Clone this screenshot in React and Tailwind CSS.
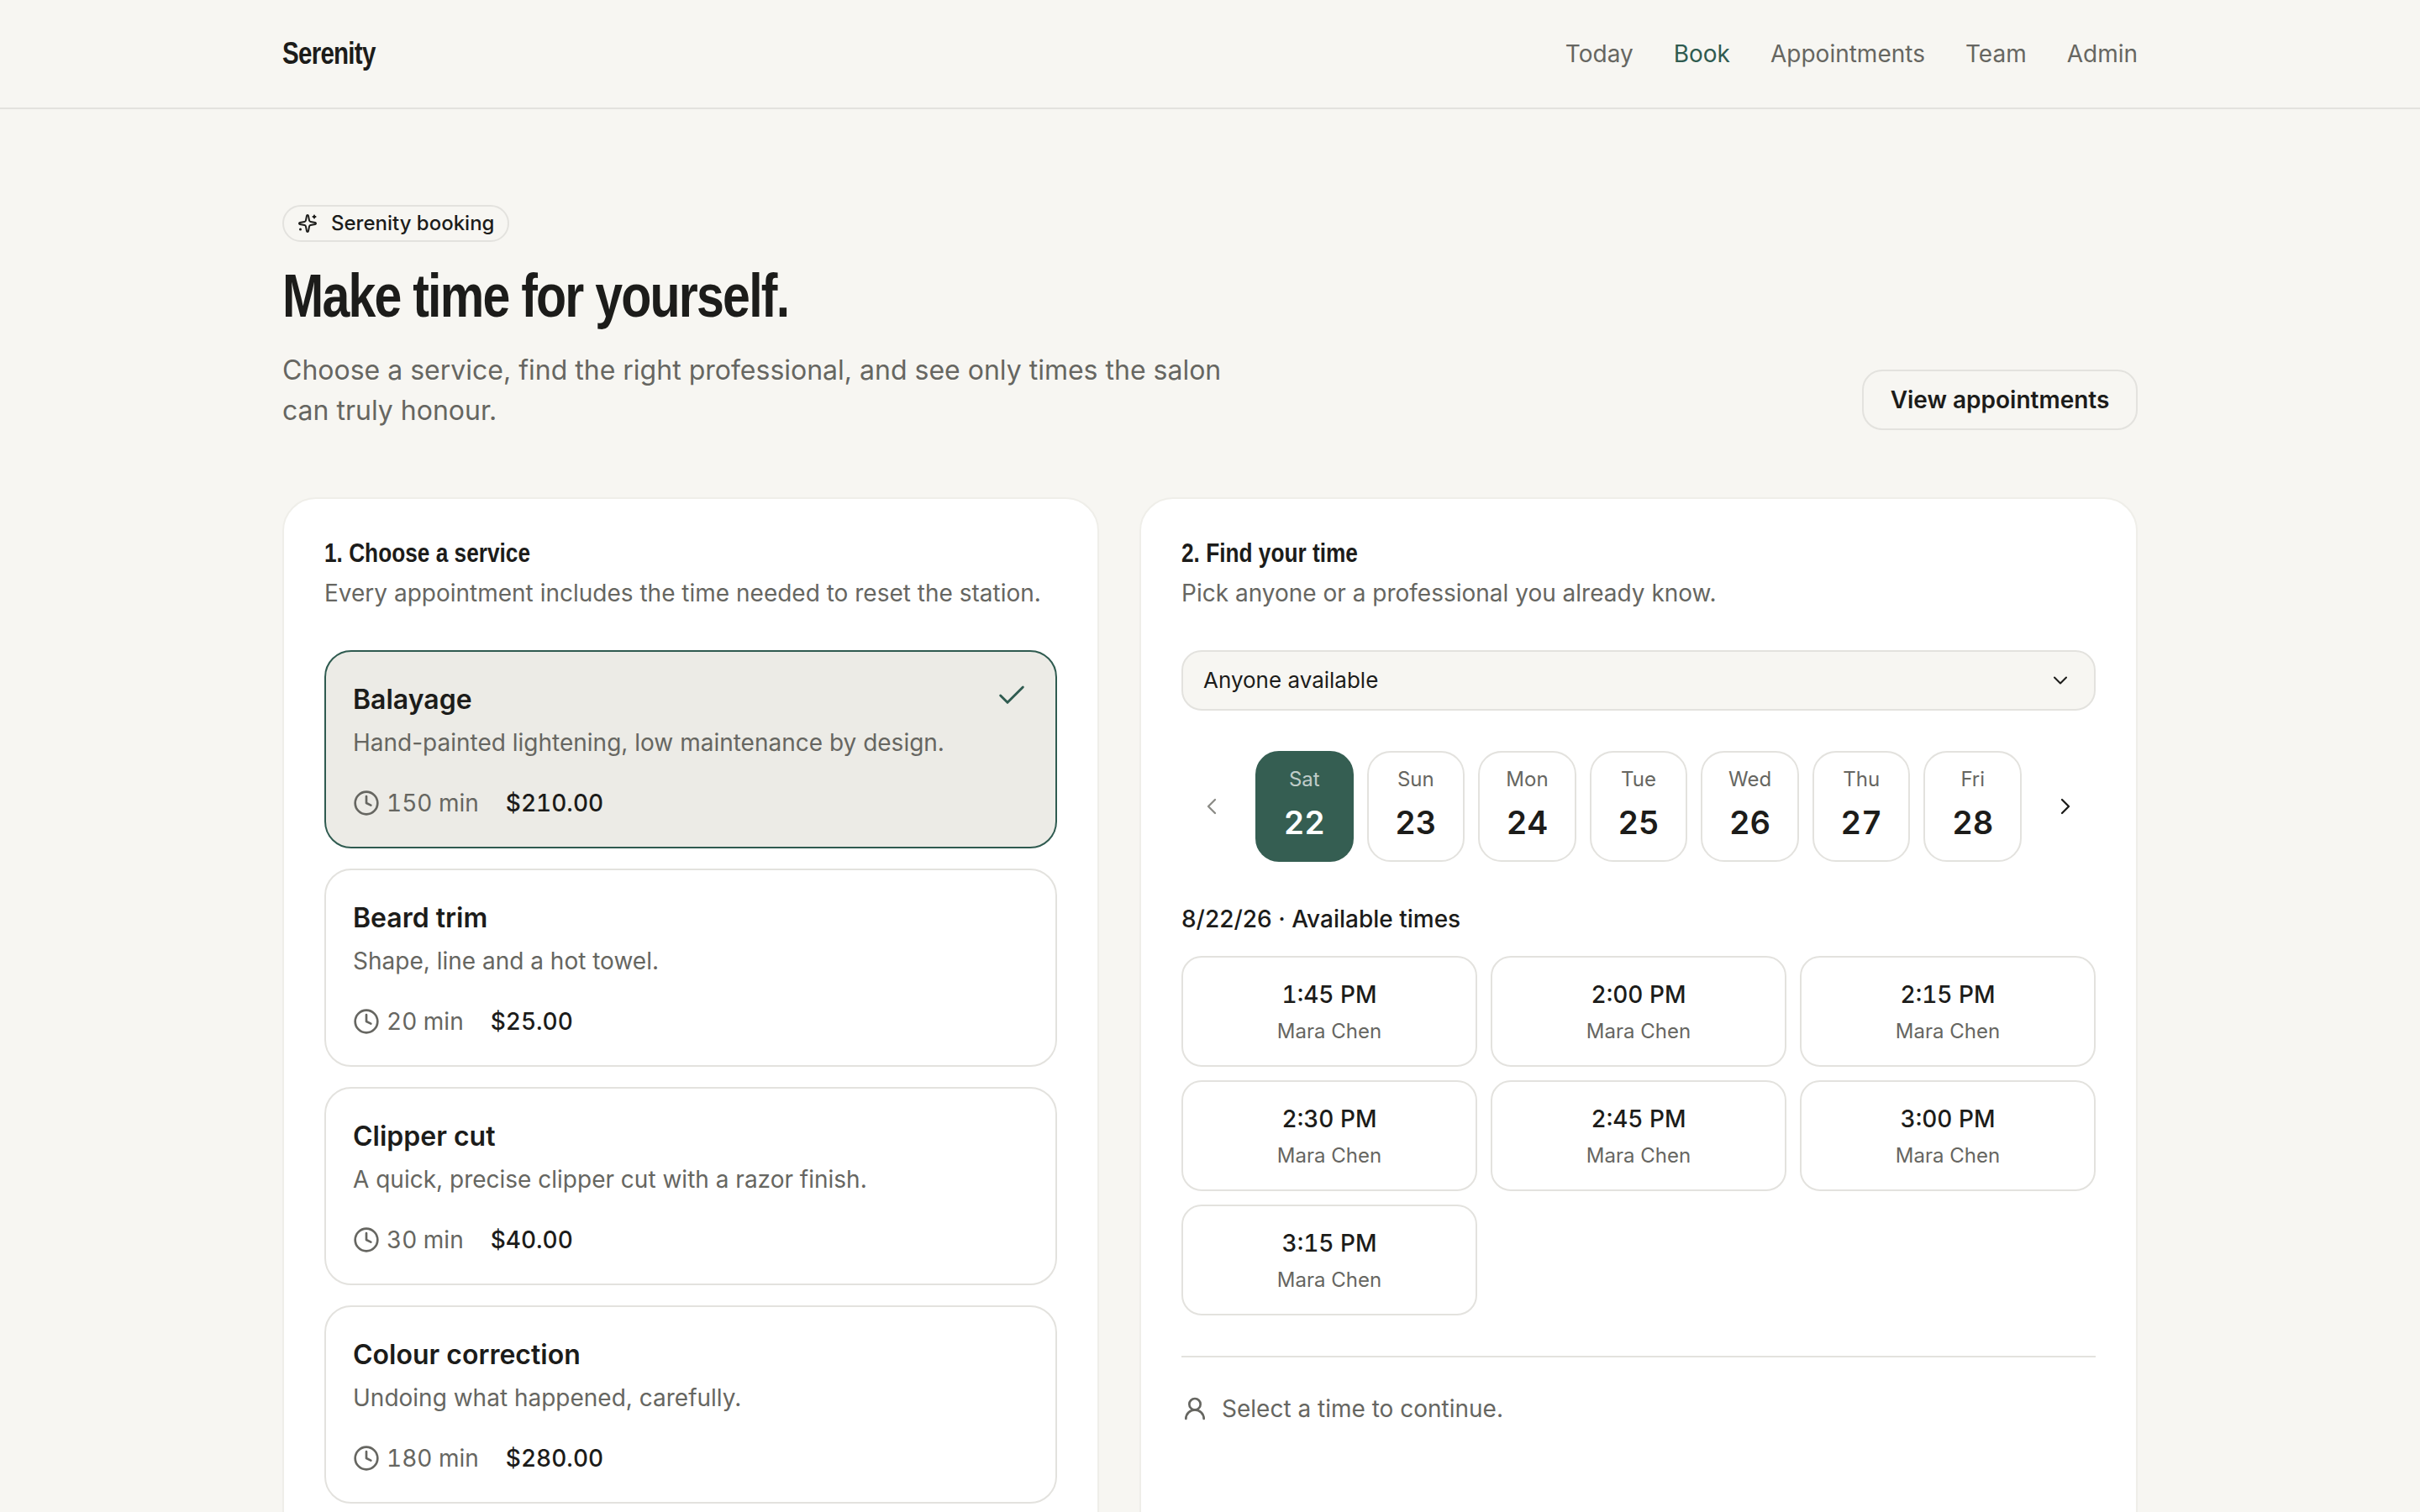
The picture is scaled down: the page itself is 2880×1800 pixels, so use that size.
import React from 'react';
import { Check, ChevronDown, ChevronLeft, ChevronRight, Clock, UserRound } from 'lucide-react';

const services = [
  { name: 'Balayage', desc: 'Hand-painted lightening, low maintenance by design.', mins: '150 min', price: '$210.00', selected: true },
  { name: 'Beard trim', desc: 'Shape, line and a hot towel.', mins: '20 min', price: '$25.00' },
  { name: 'Clipper cut', desc: 'A quick, precise clipper cut with a razor finish.', mins: '30 min', price: '$40.00' },
  { name: 'Colour correction', desc: 'Undoing what happened, carefully.', mins: '180 min', price: '$280.00' },
];

const days = [
  ['Sat', 22],
  ['Sun', 23],
  ['Mon', 24],
  ['Tue', 25],
  ['Wed', 26],
  ['Thu', 27],
  ['Fri', 28],
];

const times = ['1:45 PM', '2:00 PM', '2:15 PM', '2:30 PM', '2:45 PM', '3:00 PM', '3:15 PM'];

// no narrow grotesque is installed, so the heading face is squeezed Liberation Sans
const narrow = "inline-block origin-left scale-x-[0.82] font-['Liberation_Sans',sans-serif] font-bold";

// lucide's sparkles star, with the smaller plus and dot of the badge
const BadgeSparkle = () => (
  <svg viewBox="0 0 24 24" fill="none" stroke="currentColor" strokeWidth="2" strokeLinecap="round" strokeLinejoin="round" className="h-[24px] w-[24px]">
    <path d="M11.017 2.814a1 1 0 0 1 1.966 0l1.051 5.558a2 2 0 0 0 1.594 1.594l5.558 1.051a1 1 0 0 1 0 1.966l-5.558 1.051a2 2 0 0 0-1.594 1.594l-1.051 5.558a1 1 0 0 1-1.966 0l-1.051-5.558a2 2 0 0 0-1.594-1.594l-5.558-1.051a1 1 0 0 1 0-1.966l5.558-1.051a2 2 0 0 0 1.594-1.594z" />
    <path d="M20 2.5v3" />
    <path d="M21.5 4h-3" />
    <circle cx="3.5" cy="19" r="1.5" fill="currentColor" stroke="none" />
  </svg>
);

const App = () => {
  return (
    <div className="h-[1800px] overflow-hidden bg-[#f7f6f2] font-['Inter',sans-serif] text-[#1c1c1a]">
      <header className="h-[130px] border-b-2 border-[#e3e2de]">
        <div className="mx-[336px] flex h-full items-center justify-between">
          <span className={`${narrow} text-[36px] tracking-[-0.025em]`}>Serenity</span>
          <nav className="flex gap-[48px] text-[28px] text-[#666661]">
            <a>Today</a>
            <a className="text-[#2f5b50]">Book</a>
            <a>Appointments</a>
            <a>Team</a>
            <a>Admin</a>
          </nav>
        </div>
      </header>

      <main className="mx-[336px] pt-[114px]">
        <div className="mb-[79px] flex items-end justify-between">
          <div>
            <div className="inline-flex h-[44px] items-center gap-[16px] rounded-full border-2 border-[#e3e2de] px-[16px] text-[24px] font-medium">
              <BadgeSparkle />
              Serenity booking
            </div>
            <div className="mt-[24px]">
              <h1 className={`${narrow} text-[72px] leading-[80px] tracking-[-0.03em]`}>Make time for yourself.</h1>
            </div>
            <p className="mt-[25px] w-[1152px] text-[32px] leading-[48px] text-[#666661]">
              Choose a service, find the right professional, and see only times the salon can truly honour.
            </p>
          </div>
          <button className="mb-[1px] h-[72px] w-[328px] rounded-[24px] border-2 border-[#e3e2de] text-[28px] font-semibold">
            View appointments
          </button>
        </div>

        <div className="grid grid-cols-[972px_1188px] gap-[48px]">
          <section className="rounded-[40px] border-2 border-[#efeee9] bg-white px-[48px] pt-[48px] pb-[48px]">
            <h2 className={`${narrow} block text-[32px] leading-[32px]`}>1. Choose a service</h2>
            <p className="mt-[11px] text-[28px] leading-[40px] text-[#666661]">Every appointment includes the time needed to reset the station.</p>
            <div className="mt-[48px] flex flex-col gap-[24px]">
              {services.map((s) => (
                <div
                  key={s.name}
                  className={`relative h-[236px] rounded-[32px] border-2 px-[32px] pt-[33px] ${s.selected ? 'border-[#2f5b50] bg-[#ecebe6]' : 'border-[#e3e2de] bg-white'}`}
                >
                  {s.selected && <Check className="absolute right-[32px] top-[32px] h-[40px] w-[40px] text-[#2f5b50]" strokeWidth={1.75} />}
                  <h3 className="text-[32px] font-semibold leading-[48px]">{s.name}</h3>
                  <p className="mt-[7px] text-[28px] leading-[40px] text-[#666661]">{s.desc}</p>
                  <div className="mt-[31px] flex h-[42px] items-center text-[28px] tabular-nums">
                    <Clock className="h-[32px] w-[32px] text-[#666661]" strokeWidth={2} />
                    <span className="ml-[8px] text-[#666661]">{s.mins}</span>
                    <span className="ml-[32px] font-medium">{s.price}</span>
                  </div>
                </div>
              ))}
            </div>
          </section>

          <section className="rounded-[40px] border-2 border-[#efeee9] bg-white px-[48px] pt-[48px] pb-[48px]">
            <h2 className={`${narrow} block text-[32px] leading-[32px]`}>2. Find your time</h2>
            <p className="mt-[11px] text-[28px] leading-[40px] text-[#666661]">Pick anyone or a professional you already know.</p>

            <div className="mt-[48px] flex h-[72px] items-center justify-between rounded-[24px] border-2 border-[#e3e2de] bg-[#f7f6f2] pb-[1px] pl-[24px] pr-[26px] text-[26px]">
              Anyone available
              <ChevronDown className="h-[28px] w-[28px]" strokeWidth={1.75} />
            </div>

            <div className="mt-[48px] flex items-center gap-[16px]">
              <button className="flex h-[72px] w-[72px] shrink-0 items-center justify-center text-[#8b8b86]">
                <ChevronLeft className="h-[32px] w-[32px]" strokeWidth={1.75} />
              </button>
              {days.map(([label, num], i) => (
                <div
                  key={num}
                  className={`flex h-[132px] flex-1 flex-col items-center rounded-[28px] border-2 pt-[16px] ${i === 0 ? 'border-[#355e52] bg-[#355e52] text-white' : 'border-[#e3e2de] bg-white'}`}
                >
                  <span className={`text-[24px] leading-[32px] ${i === 0 ? 'text-white/70' : 'text-[#666661]'}`}>{label}</span>
                  <span className="mt-[9px] text-[38px] font-semibold leading-[52px] tabular-nums">{num}</span>
                </div>
              ))}
              <button className="flex h-[72px] w-[72px] shrink-0 items-center justify-center">
                <ChevronRight className="h-[32px] w-[32px]" strokeWidth={1.75} />
              </button>
            </div>

            <p className="mt-[48px] text-[28px] font-medium leading-[40px]">8/22/26 · Available times</p>

            <div className="mt-[24px] grid grid-cols-3 gap-[16px]">
              {times.map((t) => (
                <div key={t} className="flex h-[132px] flex-col items-center justify-center rounded-[24px] border-2 border-[#e3e2de] bg-white">
                  <span className="text-[28px] font-medium leading-[42px] tabular-nums">{t}</span>
                  <span className="mt-[5px] text-[24px] leading-[36px] text-[#666661]">Mara Chen</span>
                </div>
              ))}
            </div>

            <div className="mt-[48px] border-t-2 border-[#e3e2de] pt-[40px]">
              <div className="flex items-center gap-[16px] text-[28px] text-[#666661]">
                <UserRound className="h-[32px] w-[32px]" strokeWidth={2} />
                Select a time to continue.
              </div>
            </div>
          </section>
        </div>
      </main>
    </div>
  );
};

export default App;
